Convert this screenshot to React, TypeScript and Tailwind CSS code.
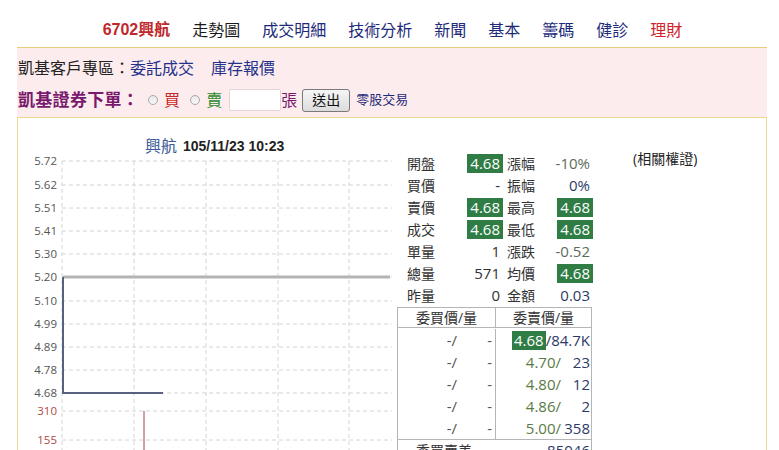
const navItems = [
  { label: '走勢圖', color: 'text-[#1a1a1a]' },
  { label: '成交明細', color: 'text-[#1d2a7a]' },
  { label: '技術分析', color: 'text-[#1d2a7a]' },
  { label: '新聞', color: 'text-[#1d2a7a]' },
  { label: '基本', color: 'text-[#1d2a7a]' },
  { label: '籌碼', color: 'text-[#1d2a7a]' },
  { label: '健診', color: 'text-[#1d2a7a]' },
  { label: '理財', color: 'text-[#d0222a]' },
];

const quoteRows = [
  { l1: '開盤', v1: '4.68', h1: true, l2: '漲幅', v2: '-10%', h2: false, c2: 'text-[#5c6b5c]' },
  { l1: '買價', v1: '-', h1: false, l2: '振幅', v2: '0%', h2: false, c2: 'text-[#2d3a66]' },
  { l1: '賣價', v1: '4.68', h1: true, l2: '最高', v2: '4.68', h2: true, c2: '' },
  { l1: '成交', v1: '4.68', h1: true, l2: '最低', v2: '4.68', h2: true, c2: '' },
  { l1: '單量', v1: '1', h1: false, l2: '漲跌', v2: '-0.52', h2: false, c2: 'text-[#5c6b5c]' },
  { l1: '總量', v1: '571', h1: false, l2: '均價', v2: '4.68', h2: true, c2: '' },
  { l1: '昨量', v1: '0', h1: false, l2: '金額', v2: '0.03', h2: false, c2: 'text-[#2d3a66]' },
];

const asks = [
  { p: '4.68', q: '84.7K', hi: true },
  { p: '4.70', q: '23', hi: false },
  { p: '4.80', q: '12', hi: false },
  { p: '4.86', q: '2', hi: false },
  { p: '5.00', q: '358', hi: false },
];

const priceLines = [
  { v: '5.72', y: 6 },
  { v: '5.62', y: 30 },
  { v: '5.51', y: 53 },
  { v: '5.41', y: 76 },
  { v: '5.30', y: 99 },
  { v: '5.20', y: 122 },
  { v: '5.10', y: 146 },
  { v: '4.99', y: 169 },
  { v: '4.89', y: 192 },
  { v: '4.78', y: 215 },
  { v: '4.68', y: 238 },
];

const volLines = [
  { v: '310', y: 256 },
  { v: '155', y: 285 },
];

const gridX = [44, 116, 188, 260, 331];

function Chart() {
  return (
    <svg width="379" height="295" className="block overflow-visible">
      {priceLines.map((l) => (
        <g key={l.v}>
          <line x1="44" x2="374" y1={l.y} y2={l.y} stroke="#d4d4d4" strokeDasharray="4 3" />
          <text x="39" y={l.y + 4} textAnchor="end" fontSize="11.5" fill="#555" fontFamily="'Open Sans', sans-serif">
            {l.v}
          </text>
        </g>
      ))}
      {volLines.map((l) => (
        <g key={l.v}>
          <line x1="44" x2="374" y1={l.y} y2={l.y} stroke="#d4d4d4" strokeDasharray="4 3" />
          <text x="39" y={l.y + 4} textAnchor="end" fontSize="11.5" fill="#b04848" fontFamily="'Open Sans', sans-serif">
            {l.v}
          </text>
        </g>
      ))}
      {gridX.map((x) => (
        <line key={x} x1={x} x2={x} y1="6" y2="295" stroke="#d4d4d4" strokeDasharray="4 3" />
      ))}
      <line x1="45" x2="372" y1="122" y2="122" stroke="#b3b3b3" strokeWidth="3" />
      <path d="M45 122 L45 238 L145 238" fill="none" stroke="#56627e" strokeWidth="2" />
      <line x1="126" x2="126" y1="256" y2="295" stroke="#a04545" strokeWidth="1" />
    </svg>
  );
}

function Val({ v, hi, color }: { v: string; hi: boolean; color?: string }) {
  return (
    <span
      className={
        hi
          ? 'bg-[#2f7d45] text-white px-[3px] leading-[19px] inline-block'
          : `px-[3px] leading-[19px] inline-block ${color || 'text-[#333]'}`
      }
    >
      {v}
    </span>
  );
}

export default function App() {
  return (
    <div className="w-[779px] h-[450px] overflow-hidden bg-white font-['Open_Sans','Noto_Sans_CJK_TC',sans-serif] text-[#222]">
      <nav className="flex justify-center items-center gap-[22px] h-[47px] pt-[12px] pl-[6px] text-[16px]">
        <span className="font-['Liberation_Sans','Noto_Sans_CJK_TC',sans-serif] font-bold text-[#c0282c]">6702興航</span>
        {navItems.map((n) => (
          <span key={n.label} className={n.color}>
            {n.label}
          </span>
        ))}
      </nav>

      <div className="ml-[17px] w-[750px] h-[70px] bg-[#fdeced] border-t border-[#e6cf7a] pl-[1px]">
        <div className="flex items-center h-[38px] pt-[1px] text-[16px]">
          <span>凱基客戶專區：</span>
          <span className="text-[#22318a]">委託成交</span>
          <span className="text-[#22318a] ml-[17px]">庫存報價</span>
        </div>
        <div className="flex items-center h-[28px] text-[16px]">
          <span className="font-bold text-[17px] tracking-[0.3px] text-[#7a1a6e]">凱基證券下單：</span>
          <span className="ml-[9px] w-[10px] h-[10px] rounded-full border border-[#a8a8a8] bg-gradient-to-b from-[#e8e8e8] to-[#f8f8f8]" />
          <span className="ml-[6px] text-[#c62828]">買</span>
          <span className="ml-[10px] w-[10px] h-[10px] rounded-full border border-[#a8a8a8] bg-gradient-to-b from-[#e8e8e8] to-[#f8f8f8]" />
          <span className="ml-[6px] text-[#2b8a2b]">賣</span>
          <span className="ml-[7px] w-[52px] h-[22px] bg-white border border-[#e2d6d6] rounded-[2px]" />
          <span className="text-[#7a1a6e]">張</span>
          <button className="ml-[5px] w-[48px] h-[23px] rounded-[3px] border border-[#7a7a7a] bg-gradient-to-b from-[#f6f6f6] to-[#dcdcdc] text-[14px] leading-none text-[#111]">
            送出
          </button>
          <span className="ml-[6px] text-[13px] text-[#1d2a7a]">零股交易</span>
        </div>
      </div>

      <div className="ml-[17px] w-[750px] h-[333px] border-t border-l border-r border-[#ecd98a] flex">
        <div className="w-[379px] shrink-0">
          <div className="h-[37px] pt-[19px] pl-[127px] flex items-center leading-[18px]">
            <span className="text-[16px] text-[#3a5a96]">興航</span>
            <span className="ml-[6px] text-[14px] font-bold font-['Liberation_Sans',sans-serif] text-[#222]">105/11/23 10:23</span>
          </div>
          <Chart />
        </div>

        <div className="w-[196px] shrink-0 pt-[34px]">
          {quoteRows.map((r) => (
            <div key={r.l1} className="flex items-center h-[22px] text-[14px]">
              <span className="pl-[10px] w-[40px] shrink-0 text-[#333]">{r.l1}</span>
              <span className="w-[66px] shrink-0 text-right text-[15px]">
                <Val v={r.v1} hi={r.h1} />
              </span>
              <span className="ml-[4px] w-[30px] shrink-0 text-[#333]">{r.l2}</span>
              <span className="w-[56px] shrink-0 text-right text-[15px]">
                <Val v={r.v2} hi={r.h2} color={r.c2} />
              </span>
            </div>
          ))}
          <div className="mt-[1px] w-[195px] border border-[#b5b5b5] text-[15px]">
            <div className="flex h-[20px] border-b border-[#b5b5b5] text-[14px] text-[#333]">
              <div className="w-[98px] border-r border-[#b5b5b5] flex items-center justify-center">委買價/量</div>
              <div className="flex-1 flex items-center justify-center">委賣價/量</div>
            </div>
            <div className="flex pt-[1px]">
              <div className="w-[98px] border-r border-[#b5b5b5]">
                {asks.map((a) => (
                  <div key={a.p} className="h-[22px] flex items-center text-[#555]">
                    <span className="w-[59px] text-right">-/</span>
                    <span className="w-[35px] text-right">-</span>
                  </div>
                ))}
              </div>
              <div className="flex-1">
                {asks.map((a) => (
                  <div key={a.p} className="h-[22px] flex items-center justify-end pr-[1px]">
                    {a.hi ? (
                      <span className="bg-[#2f7d45] text-white px-[2px] leading-[19px]">{a.p}</span>
                    ) : (
                      <span className="text-[#5a7a46]">{a.p}</span>
                    )}
                    <span className={a.hi ? 'text-[#2d3a66]' : 'text-[#5a7a46]'}>/</span>
                    <span className={a.hi ? 'text-[#2d3a66]' : 'w-[29px] text-right text-[#2d3a66]'}>{a.q}</span>
                  </div>
                ))}
              </div>
            </div>
            <div className="flex h-[22px] border-t border-[#b5b5b5] items-center">
              <span className="pl-[18px] text-[14px] text-[#333]">委買賣差</span>
              <span className="ml-auto pr-[1px] text-[#2d3a66]">-85046</span>
            </div>
          </div>
        </div>

        <div className="flex-1 pl-[40px] pt-[28px]">
          <span className="text-[14px] text-[#222]">(相關權證)</span>
        </div>
      </div>
    </div>
  );
}
